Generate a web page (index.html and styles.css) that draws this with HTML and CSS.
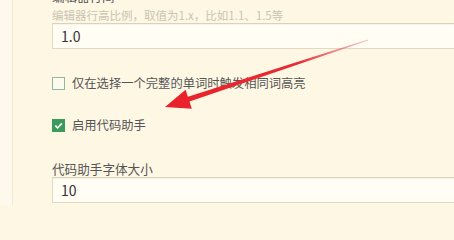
FILE: index.html
```html
<!DOCTYPE html>
<html lang="zh">
<head>
<meta charset="utf-8">
<link rel="stylesheet" href="styles.css">
</head>
<body>
<div class="page">
  <div class="strip"></div>
  <div class="main">
    <div class="title">编辑器行间</div>
    <div class="hint">编辑器行高比例，取值为1.x，比如1.1、1.5等</div>
    <div class="input">1.0</div>
    <label class="check check-first">
      <span class="box"></span>
      <span class="text">仅在选择一个完整的单词时触发相同词高亮</span>
    </label>
    <label class="check check-second">
      <span class="box checked">
        <svg viewBox="0 0 13 13" width="13" height="13"><path d="M3.3 6.6 L5.6 8.9 L9.8 4.4" fill="none" stroke="#fff" stroke-width="1.6"/></svg>
      </span>
      <span class="text">启用代码助手</span>
    </label>
    <div class="field-label">代码助手字体大小</div>
    <div class="input">10</div>
  </div>
  <svg class="arrow" width="454" height="205" viewBox="0 0 454 205">
    <defs>
      <linearGradient id="ag" gradientUnits="userSpaceOnUse" x1="165" y1="107" x2="370" y2="40">
        <stop offset="0" stop-color="#e8222b"/>
        <stop offset="0.65" stop-color="#e92a34"/>
        <stop offset="1" stop-color="#e36a78" stop-opacity="0.35"/>
      </linearGradient>
    </defs>
    <polygon fill="url(#ag)" points="165,107 191.8,108.7 189.5,101.6 368.2,40.4 367.8,39.6 187.9,96.8 185.6,89.7"/>
  </svg>
</div>
</body>
</html>
```
FILE: styles.css
```css
html, body {
  margin: 0;
  padding: 0;
  background: #fdf7e4;
  overflow: hidden;
}
.page {
  position: relative;
  width: 454px;
  height: 205px;
  display: flex;
  font-family: "Noto Sans CJK SC", "Noto Sans", sans-serif;
  overflow: hidden;
}
.strip {
  width: 12px;
  flex: none;
  background: #fdf9ec;
  border-right: 1px solid #efe9d5;
}
.main {
  flex: 1;
  padding-left: 39px;
  display: flex;
  flex-direction: column;
  align-items: flex-start;
}
.title {
  margin-top: -12px;
  height: 18px;
  line-height: 18px;
  font-size: 12.5px;
  color: #555;
}
.hint {
  margin-top: 2px;
  height: 15px;
  line-height: 15px;
  font-size: 11.5px;
  color: #cbc5b3;
  white-space: nowrap;
}
.input {
  box-sizing: border-box;
  width: 430px;
  height: 26px;
  line-height: 24px;
  padding-left: 8px;
  border: 1px solid #e0dac3;
  border-top-color: #d8d4bb;
  background: #fffdf4;
  box-shadow: inset 0 1px 1px rgba(0,0,0,0.04);
  font-size: 14px;
  color: #333;
}
.check {
  display: flex;
  align-items: center;
  height: 20px;
  gap: 7px;
}
.check-first { margin-top: 24px; }
.check-second { margin-top: 22px; }
.box {
  box-sizing: border-box;
  width: 13px;
  height: 13px;
  border: 1px solid #94b89f;
  background: #fdfaef;
  display: block;
}
.box.checked {
  border: none;
  background: #3c9a5c;
}
.box svg { display: block; }
.text {
  font-size: 12.3px;
  color: #555;
  white-space: nowrap;
}
.field-label {
  margin-top: 26px;
  height: 16px;
  line-height: 16px;
  font-size: 12.6px;
  color: #555;
}
.arrow {
  position: absolute;
  left: 0;
  top: 0;
  pointer-events: none;
}
```
